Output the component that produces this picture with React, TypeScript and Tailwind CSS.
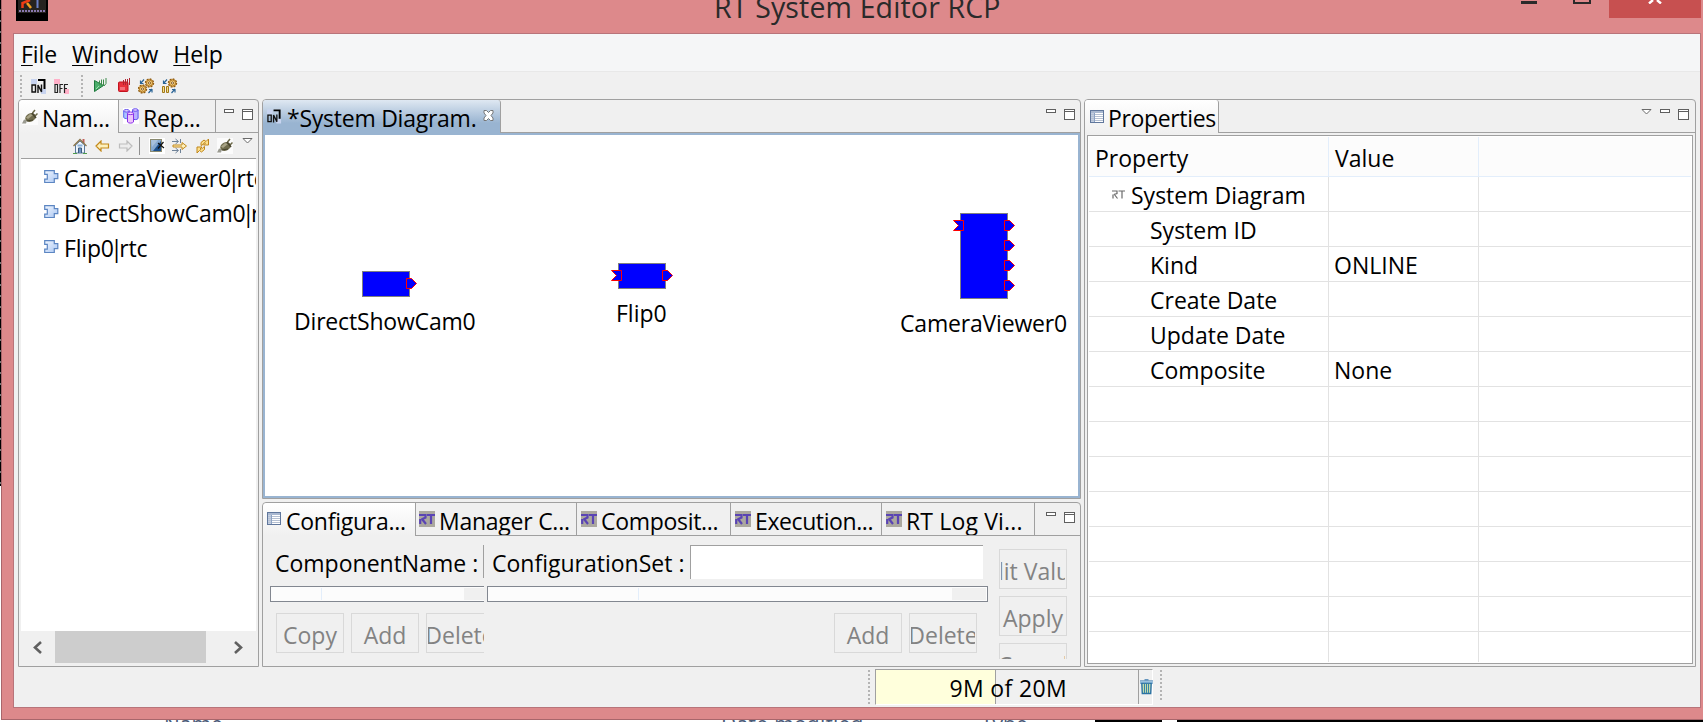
import React from "react";

type Kids = { children?: React.ReactNode };

const OnlineIcon = ({ off = false, small = false }: { off?: boolean; small?: boolean }) => (
  <svg width={small ? 15 : 16} height="16" viewBox="0 0 16 16" className="shrink-0">
    <rect x="0" y="1" width="6" height="5" fill={off ? "#ffb0c8" : "#c8d4f0"} />
    <rect x="10" y="11" width="5" height="5" fill={off ? "#ffb0c8" : "#c8d4f0"} />
    {!off && <path d="M7 2h6.500v9" fill="none" stroke="#000" strokeWidth="2" />}
    {off ? (
      <path d="M1 6.500h2.500v8H1zM6 15V6.500h3M6 10.500h2.500M10.500 15V6.500H14M10.500 10.500H13" fill="none" stroke="#222" strokeWidth="1.200" />
    ) : (
      <path d="M1 7h3.500v7H1zM7 15V7l3.500 7V6.500" fill="none" stroke="#111" strokeWidth="1.400" />
    )}
  </svg>
);

const PlugIcon = () => (
  <svg width="16" height="16" viewBox="0 0 16 16" className="shrink-0">
    <rect width="16" height="16" fill="#fbfbfb" />
    <path d="M0 14.500l2-4 3 1-1 3z" fill="#9a9a90" />
    <ellipse cx="8.500" cy="8.500" rx="5.500" ry="4.200" transform="rotate(-25 8.500 8.500)" fill="#6f6b4c" />
    <path d="M4 8.500l4-3.500 3 1-5 4z" fill="#a8a386" />
    <path d="M10.500 4l2.500-3M13 7l2.500-2.500" stroke="#6b6848" strokeWidth="1.500" />
    <path d="M10 4l4 5" stroke="#4a4630" strokeWidth="1.600" />
    <path d="M5 12l6-1" stroke="#45422c" />
  </svg>
);

const RepoIcon = () => (
  <svg width="16" height="16" viewBox="0 0 16 16" className="shrink-0">
    <rect width="16" height="16" fill="#fff" />
    <g strokeWidth="1">
      <path d="M.7 3v6.500c1 1.500 4.500 1.500 5.600 0V3z" fill="#aac4ff" stroke="#5a6cf0" />
      <ellipse cx="3.500" cy="2.800" rx="2.800" ry="1.300" fill="#d9d0ff" stroke="#6a55ee" />
      <path d="M9.500 2v8.500c1 1.500 4.500 1.500 5.600 0V2z" fill="#b9b0ff" stroke="#5a50ee" />
      <ellipse cx="12.300" cy="2" rx="2.800" ry="1.300" fill="#e4c8ff" stroke="#6a55ee" />
      <path d="M4.500 5.500v8.500c1 1.500 5 1.500 6 0V5.500z" fill="#ecc6fa" stroke="#8a30e8" />
      <ellipse cx="7.500" cy="5.300" rx="3" ry="1.300" fill="#f7dcff" stroke="#8a30e8" />
    </g>
  </svg>
);

const PlayIcon = () => (
  <svg width="15" height="15" viewBox="0 0 15 15" className="shrink-0">
    <path d="M1.500 2.500l9 5-9 6z" fill="#4bae6b" stroke="#1d7a3c" />
    <path d="M6.500 2.500v4M8.500 1.500v6M10.500 1.500v6M13 0v5.500L11 8" stroke="#3c8a4a" fill="none" />
    <path d="M3 11l3-3" stroke="#9be0ae" />
  </svg>
);

const StopIcon = () => (
  <svg width="15" height="15" viewBox="0 0 15 15" className="shrink-0">
    <rect x="1.500" y="4" width="9.500" height="9.500" rx="1" fill="#e8323c" stroke="#c3121e" />
    <rect x="3" y="9" width="5" height="3" fill="#f4707a" />
    <path d="M6.500 2v5M8.500 1v6M10.500 1v6M12.500 0v7" stroke="#b02430" />
  </svg>
);

const Gear = ({ x, y }: { x: number; y: number }) => (
  <g>
    <circle cx={x} cy={y} r="4" fill="#e8b75c" stroke="#8c5a14" strokeWidth="1.400" strokeDasharray="1.800 1.300" />
    <circle cx={x} cy={y} r="3" fill="#f4cd7c" stroke="#a8701c" strokeWidth=".9" />
    <circle cx={x} cy={y} r="1.100" fill="#fff" stroke="#7c4e10" strokeWidth=".9" />
  </g>
);

const GearsIcon = ({ pause = false }: { pause?: boolean }) => (
  <svg width="17" height="16" viewBox="0 0 17 16" className="shrink-0">
    <Gear x={11.500} y={5} />
    {pause ? (
      <path d="M1.500 8.500h2v6h-2zM5.500 8.500h2v6h-2z" fill="#f7e08a" stroke="#a07818" />
    ) : (
      <Gear x={4.500} y={11} />
    )}
    <path d="M2.500 5.500L6 1.500M2.500 2.500v3h3M10.500 15l3.500-4M11 11.500h3v3" stroke="#2a6496" fill="none" strokeWidth="1.200" />
  </svg>
);

const HouseIcon = () => (
  <svg width="14" height="16" viewBox="0 0 14 16" className="shrink-0">
    <path d="M2.500 7v8h9V7L7 3z" fill="#eef5fb" stroke="#5a7a9c" />
    <path d="M10.500 1v4" stroke="#c0605a" strokeWidth="2" />
    <path d="M.5 8L7 1.500 13.500 8" fill="none" stroke="#8a7448" strokeWidth="1.300" />
    <path d="M5.500 15v-5h3v5" fill="#6f94c0" stroke="#3c5c80" />
    <path d="M4.500 7.500h5" stroke="#8ab0d8" strokeWidth="2" />
    <path d="M0 15.500h4M10 15.500h4" stroke="#4f9c4a" />
  </svg>
);

const BackIcon = ({ flip = false }: { flip?: boolean }) => (
  <svg width="15" height="12" viewBox="0 0 15 12" className={flip ? "shrink-0 -scale-x-100" : "shrink-0"}>
    <path d="M1 6l5-5v3h7.500v4H6v3z" fill={flip ? "#ededed" : "#fdf0bc"} stroke={flip ? "#bdbdbd" : "#c48a1c"} strokeWidth="1.200" />
  </svg>
);

const EditIcon = () => (
  <svg width="16" height="16" viewBox="0 0 16 16" className="shrink-0">
    <rect width="16" height="16" fill="#fff" />
    <rect x="1.500" y="1.500" width="11" height="12" fill="#86a8d0" stroke="#8a8a70" />
    <path d="M12 3L4 13h8z" fill="#1c4f8c" />
    <path d="M2 2h7L3 9z" fill="#a8c0dc" />
    <path d="M9 5l6 5M14.500 4L9 10.500" stroke="#111" strokeWidth="1.200" />
  </svg>
);

const FilterIcon = () => (
  <svg width="16" height="16" viewBox="0 0 16 16" className="shrink-0">
    <path d="M0 3.500h6M0 12.500h6M3.500 1l3 2.500-3 2.500M3.500 10l3 2.500-3 2.500M8.500 1v4M8.500 11v4" fill="none" stroke="#6f8298" />
    <path d="M1 7h9V4.500L14.500 8 10 11.500V9H1z" fill="#fdf0bc" stroke="#c48a1c" />
  </svg>
);

const RefreshIcon = () => (
  <svg width="16" height="16" viewBox="0 0 16 16" className="shrink-0">
    <path d="M6 7.500V4.500L9 2l2 1.500 2.500-2.500v6H8.500l2-2-1-.5L8 6.500z" fill="#fde08c" stroke="#c0861a" />
    <path d="M9.500 8.500v3l-3 2.500-2-1.500L2 15V9h5l-2 2 1 .5L7.500 10z" fill="#fde08c" stroke="#c0861a" />
  </svg>
);

const ComponentIcon = () => (
  <svg width="15" height="14" viewBox="0 0 15 14" className="shrink-0">
    <defs>
      <linearGradient id="cmp" x1="0" y1="0" x2="1" y2="1">
        <stop offset="0" stopColor="#f2f7ff" />
        <stop offset="1" stopColor="#a9c6f2" />
      </linearGradient>
    </defs>
    <path d="M.7.7h9.600v3h3.500v5h-3.500v3.800H.7V9.200h2.600V4.300H.7z" fill="url(#cmp)" stroke="#5c86c2" strokeWidth="1.200" />
  </svg>
);

const TableIcon = () => (
  <svg width="14" height="13" viewBox="0 0 14 13" shapeRendering="crispEdges" className="shrink-0">
    <rect x=".5" y=".5" width="13" height="12" fill="#fff" stroke="#60779c" />
    <rect x="1" y="1" width="12" height="2" fill="#a9b8d0" />
    <rect x="1" y="3" width="3" height="9" fill="#c3cfe2" />
    <path d="M1 4.500h12M1 6.500h12M1 8.500h12M1 10.500h12" stroke="#b5c0d2" />
    <path d="M4.500 3v9" stroke="#8da3c4" />
  </svg>
);

const RtIcon = () => (
  <svg width="16" height="16" viewBox="0 0 16 16" className="shrink-0">
    <rect width="16" height="16" fill="#aba89f" />
    <path d="M0 4h6.500v2.500L2.500 8.500M3 8l4 5M1.200 8v5M8 4h8M12 4v9" fill="none" stroke="#5a44b4" strokeWidth="2.200" />
  </svg>
);

const SmallRt = () => (
  <svg width="13" height="9" viewBox="0 0 13 9" className="shrink-0">
    <path d="M0 1h5v2.500L2 4.500M2 4l3.500 4.500M1 4.500v4M6.500 1H13M10 1v7.500" fill="none" stroke="#6a6a6a" strokeWidth="1.200" />
  </svg>
);

const MinIcon = () => <span className="block h-1 w-2.5 shrink-0 border border-[#5f5f5f] bg-white" />;
const MaxIcon = () => (
  <span className="block h-[11px] w-[11px] shrink-0 border border-[#5f5f5f] bg-white">
    <span className="mt-px block h-px bg-[#5f5f5f]" />
  </span>
);
const MenuTriangle = () => (
  <svg width="11" height="7" viewBox="0 0 11 7" className="shrink-0">
    <path d="M1 .5h9L5.500 5z" fill="#fff" stroke="#6a6a6a" />
  </svg>
);

const Trash = () => (
  <svg width="13" height="16" viewBox="0 0 13 16" className="shrink-0">
    <path d="M1.800 4h9.400l-.5 10.500H2.300z" fill="#c4dcae" stroke="#2a72a4" strokeWidth="1.400" />
    <path d="M4.500 5v9M6.500 5v9M8.500 5v9" stroke="#3a84a4" />
    <path d="M0 4h13M0 2h13M4.500.8h4" stroke="#2b6fa8" strokeWidth="1" />
    <path d="M.5 3h12" stroke="#a9d2ee" />
  </svg>
);

const Grip = ({ h }: { h: string }) => (
  <span className={`block w-0.5 shrink-0 bg-[repeating-linear-gradient(to_bottom,#b4b4b4_0_2px,transparent_2px_4px)] ${h}`} />
);

const Tab = ({ children, className }: Kids & { className: string }) => (
  <div className={`flex h-[33px] shrink-0 overflow-hidden border-[#a0a0a0] whitespace-pre ${className}`}>{children}</div>
);

const Button = ({ children, className = "" }: Kids & { className?: string }) => (
  <div className={`flex h-10 w-[68px] shrink-0 justify-center overflow-hidden border border-[#d9d9d9] px-px pt-[5px] whitespace-pre text-[#838383] ${className}`}>
    <span className="flex w-16 shrink-0 justify-center overflow-hidden">{children}</span>
  </div>
);

const OutPort = ({ className }: { className: string }) => (
  <svg width="12" height="11" viewBox="0 0 12 11" className={`absolute ${className}`}>
    <path d="M.5.5h5l5 5-5 5h-5z" fill="#00f" stroke="#f00" />
  </svg>
);
const InPort = ({ className }: { className: string }) => (
  <svg width="12" height="11" viewBox="0 0 12 11" className={`absolute ${className}`}>
    <path d="M.5.5h10v10H.5l5-5z" fill="#00f" stroke="#f00" />
  </svg>
);

const properties: [string, string][] = [
  ["System ID", ""],
  ["Kind", "ONLINE"],
  ["Create Date", ""],
  ["Update Date", ""],
  ["Composite", "None"],
  ["", ""], ["", ""], ["", ""], ["", ""], ["", ""], ["", ""], ["", ""],
];

const bottomTabs: [string, string, string][] = [
  ["Manager C...", "w-[162px]", "tracking-[-0.25px]"],
  ["Composit...", "w-[154px]", "tracking-[-0.3px]"],
  ["Execution...", "w-[151px]", "tracking-[-0.4px]"],
  ["RT Log Vi...", "w-[153px]", "tracking-[0.15px]"],
];

function NamingView() {
  return (
    <section className="flex w-[241px] shrink-0 flex-col rounded-t-[4px] border border-[#a0a0a0]">
      <div className="flex h-[33px]">
        <Tab className="w-[99px] rounded-tl-[4px] bg-linear-to-b from-white to-[#f0f0f0] pl-[3px]">
          <span className="pt-[9px]"><PlugIcon /></span>
          <span className="pt-0.5 pl-1 tracking-[-0.3px]">Nam...</span>
        </Tab>
        <Tab className="w-[98px] border-r border-b border-l pl-1">
          <span className="pt-2"><RepoIcon /></span>
          <span className="pt-0.5 pl-1 tracking-[-0.3px]">Rep...</span>
        </Tab>
        <div className="flex grow gap-2 border-b border-[#a0a0a0] pt-[9px] pl-2"><MinIcon /><MaxIcon /></div>
      </div>
      <div className="mx-0.5 flex h-[26px] items-center border-b border-[#a0a0a0] pl-[52px]">
        <HouseIcon />
        <span className="w-2" /><BackIcon />
        <span className="w-2" /><BackIcon flip />
        <span className="ml-1.5 h-[18px] w-px bg-[#909090]" />
        <span className="w-[9px]" /><EditIcon />
        <span className="w-[7px]" /><FilterIcon />
        <span className="w-[7px]" /><RefreshIcon />
        <span className="w-1.5" /><PlugIcon />
        <span className="mb-2 ml-[9px]"><MenuTriangle /></span>
      </div>
      <div className="mx-0.5 grow overflow-hidden bg-white pl-[23px]">
        {["CameraViewer0", "DirectShowCam0", "Flip0"].map((n) => (
          <div key={n} className="flex h-[35px] items-center gap-[5px] whitespace-pre">
            <ComponentIcon />
            <span className="pt-0.5 tracking-[-0.18px]">{n}<span className="-mx-[3.500px]">|</span>rtc</span>
          </div>
        ))}
      </div>
      <div className="mx-0.5 mb-[3px] flex h-8 items-center bg-[#f0f0f0]">
        <svg width="34" height="32" viewBox="0 0 34 32"><path d="M20 11l-6 5.500 6 5.500" fill="none" stroke="#606060" strokeWidth="2.600" /></svg>
        <span className="h-8 w-[151px] bg-[#cdcdcd]" />
        <svg width="50" height="32" viewBox="0 0 50 32"><path d="M29 11l6 5.500-6 5.500" fill="none" stroke="#606060" strokeWidth="2.600" /></svg>
      </div>
    </section>
  );
}

function DiagramView() {
  return (
    <section className="flex h-[400px] flex-col rounded-t-[4px] border border-[#a0a0a0]">
      <div className="flex h-[33px]">
        <Tab className="w-[238px] rounded-t-[3px] border-r bg-linear-to-b from-[#dfe8f2] to-[#99b4d1] to-70% pl-1">
          <span className="pt-2"><OnlineIcon small /></span>
          <span className="pt-0.5 pl-[5px] tracking-[-0.25px]">*System Diagram.</span>
          <svg width="11" height="11" viewBox="0 0 11 11" className="mt-2.5 ml-[7px]">
            <path d="M1 .5h2.500l2 2 2-2H10V3L8 5.500 10 8v2.500H7.500l-2-2-2 2H1V8l2-2.500L1 3z" fill="#fff" stroke="#777" />
          </svg>
        </Tab>
        <div className="flex grow justify-end gap-2 border-b border-[#a0a0a0] pt-[9px] pr-[5px]"><MinIcon /><MaxIcon /></div>
      </div>
      <div className="relative grow border-2 border-[#99b4d1] bg-white tracking-[-0.18px] whitespace-pre">
        <div className="absolute top-[136px] left-[97px] h-[26px] w-12 border border-[#808080] bg-[#00f]" />
        <OutPort className="top-[143px] left-[141px]" />
        <span className="absolute top-[170px] left-[29px]">DirectShowCam0</span>
        <div className="absolute top-32 left-[353px] h-[26px] w-12 border border-[#808080] bg-[#00f]" />
        <InPort className="top-[135px] left-[346px]" />
        <OutPort className="top-[135px] left-[397px]" />
        <span className="absolute top-[162px] left-[351px] tracking-normal">Flip0</span>
        <div className="absolute top-[78px] left-[695px] h-[86px] w-12 border border-[#808080] bg-[#00f]" />
        <InPort className="top-[85px] left-[688px]" />
        <OutPort className="top-[85px] left-[739px]" />
        <OutPort className="top-[105px] left-[739px]" />
        <OutPort className="top-[125px] left-[739px]" />
        <OutPort className="top-[145px] left-[739px]" />
        <span className="absolute top-[172px] left-[635px]">CameraViewer0</span>
      </div>
    </section>
  );
}

function ConfigurationView() {
  return (
    <section className="mt-[3px] flex h-[165px] flex-col rounded-t-[4px] border border-[#a0a0a0]">
      <div className="flex h-[33px]">
        <Tab className="w-[152px] rounded-tl-[4px] bg-linear-to-b from-white to-[#f0f0f0] pl-1">
          <span className="pt-[9px]"><TableIcon /></span>
          <span className="pt-0.5 pl-[5px] tracking-[-0.25px]">Configura...</span>
        </Tab>
        {bottomTabs.map(([label, w, tracking], i) => (
          <Tab key={label} className={`${w} border-b ${i === 0 ? "border-x pl-[3px]" : "border-r pl-1"}`}>
            <span className="pt-2"><RtIcon /></span>
            <span className={`pt-0.5 pl-1 ${tracking}`}>{label}</span>
          </Tab>
        ))}
        <div className="flex grow justify-end gap-2 border-b border-[#a0a0a0] pt-[9px] pr-[5px]"><MinIcon /><MaxIcon /></div>
      </div>
      <div className="flex grow pl-[7px]">
        <div className="flex w-[214px] flex-col overflow-hidden">
          <div className="mt-[9px] flex h-[33px] items-start border-r border-[#a0a0a0] pt-[2px] pl-[5px] whitespace-pre">ComponentName :</div>
          <div className="mt-2 flex h-4 border-y border-l border-[#828790] bg-[#fcfcfc] py-px">
            <span className="ml-[50px] h-full w-px bg-[#e3eefb]" />
            <span className="ml-auto h-full w-5 bg-[#f0f0f0]" />
          </div>
          <div className="mt-[11px] flex gap-[7px] pl-1.5">
            <Button>Copy</Button><Button>Add</Button><Button>Delete</Button>
          </div>
        </div>
        <div className="ml-[3px] flex w-[501px] flex-col">
          <div className="mt-[9px] flex h-[34px] items-start pl-[5px] whitespace-pre">
            <span className="w-[198px] pt-[2px]">ConfigurationSet :</span>
            <span className="h-[34px] w-[293px] border-t border-l border-[#a0a0a0] bg-white" />
          </div>
          <div className="mt-[7px] flex h-4 border border-[#828790] bg-[#fcfcfc] p-px">
            <span className="ml-[149px] h-full w-px bg-[#e3eefb]" />
            <span className="ml-auto h-full w-[34px] bg-[#f0f0f0]" />
          </div>
          <div className="mt-[11px] flex justify-end gap-[7px] pr-[11px]">
            <Button>Add</Button><Button>Delete</Button>
          </div>
        </div>
        <div className="mt-[13px] ml-[11px] flex h-[110px] flex-col gap-[7px] overflow-hidden">
          <Button><span className="-ml-1.5">Edit Value</span></Button><Button>Apply</Button><Button>Cancel</Button>
        </div>
      </div>
    </section>
  );
}

function PropertiesView() {
  return (
    <section className="ml-[3px] flex w-[612px] shrink-0 flex-col rounded-t-[4px] border border-[#a0a0a0]">
      <div className="flex h-[33px]">
        <Tab className="w-[134px] rounded-t-[3px] border-r bg-linear-to-b from-white to-[#f0f0f0] pl-[5px]">
          <span className="pt-[10px]"><TableIcon /></span>
          <span className="pt-0.5 pl-1 tracking-[-0.35px]">Properties</span>
        </Tab>
        <div className="flex grow justify-end gap-2 border-b border-[#a0a0a0] pt-[9px] pr-1.5"><MenuTriangle /><MinIcon /><MaxIcon /></div>
      </div>
      <div className="mx-0.5 mt-0.5 mb-0.5 flex grow flex-col overflow-hidden border border-[#a0a0a0] bg-white p-px whitespace-pre">
        <div className="flex h-10 shrink-0 border-b border-[#e3eefb] bg-[#fcfcfc]">
          <div className="flex w-60 items-center border-r border-[#e3eefb] pt-0.5 pl-1.5">Property</div>
          <div className="flex w-[150px] items-center border-r border-[#e3eefb] pt-0.5 pl-1.5">Value</div>
        </div>
        <div className="flex h-[35px] shrink-0 border-b border-[#e2e2e2]">
          <div className="flex w-60 items-center border-r border-[#e2e2e2] pl-[23px]"><SmallRt /><span className="pt-0.5 pl-1.5">System Diagram</span></div>
          <div className="w-[150px] border-r border-[#e2e2e2]" />
        </div>
        {properties.map(([name, value], i) => (
          <div key={i} className="flex h-[35px] shrink-0 border-b border-[#e2e2e2]">
            <div className="flex w-60 items-center border-r border-[#e2e2e2] pt-0.5 pl-[61px]">{name}</div>
            <div className="flex w-[150px] items-center border-r border-[#e2e2e2] pt-0.5 pl-[5px]">{value}</div>
          </div>
        ))}
        <div className="flex grow">
          <div className="w-60 border-r border-[#e2e2e2]" />
          <div className="w-[150px] border-r border-[#e2e2e2]" />
        </div>
      </div>
    </section>
  );
}

export default function App() {
  return (
    <div className="flex h-[722px] w-[1703px] flex-col overflow-hidden bg-white font-['Open_Sans','Noto_Sans',sans-serif] text-[23px] leading-8 text-black">
      <div className="flex h-[720px]">
        <div className="w-px shrink-0">
          <div className="h-[486px] bg-[repeating-linear-gradient(to_bottom,#000_0_9px,#777_9px_11px)]" />
        </div>
        <div className="flex w-[1702px] shrink-0 flex-col border-b border-l border-[#a8666b] bg-[#dd898b] pl-[11px]">
          <header className="flex h-[33px] shrink-0">
            <div className="ml-[3px] h-[21px] w-8 bg-black">
              <svg width="32" height="21" viewBox="0 0 32 21">
                <rect x="2" width="28" height="13" fill="#262320" />
                <path d="M14 0L6.500 3v5" fill="none" stroke="#f03c14" strokeWidth="2.500" />
                <path d="M11 3l4 5" stroke="#f0a020" strokeWidth="2.500" />
                <path d="M21.500 0v8" stroke="#6a80c8" strokeWidth="2" />
                <path d="M3 11h26" stroke="#8878b0" strokeWidth="2" strokeDasharray="2 1" />
              </svg>
            </div>
            <h1 className="-mt-[13px] ml-[666px] w-[807px] text-[28.500px] leading-10 tracking-[0.15px] whitespace-pre text-[#2a2a2a]">RT System Editor RCP</h1>
            <span className="mt-px h-[3px] w-4 bg-[#2a2a2a]" />
            <span className="ml-9 h-1 w-[18px] border-x-2 border-b-2 border-[#2a2a2a]" />
            <span className="ml-[18px] flex h-[18px] w-[92px] justify-center bg-[#c75050]">
              <svg width="14" height="4" viewBox="0 0 14 4"><path d="M1 3.500L5 0M13 3.500L9 0" stroke="#fff" strokeWidth="2.400" /></svg>
            </span>
          </header>
          <div className="flex h-[675px] w-[1688px] flex-col border border-[#b8747a] bg-[#f0f0f0]">
            <nav className="flex h-[38px] shrink-0 gap-[15px] border-b border-[#e8e8e8] bg-[#f5f6f7] pt-1 pl-[7px]">
              {["File", "Window", "Help"].map((m) => (
                <span key={m} className="tracking-[-0.1px]"><span className="underline decoration-1 underline-offset-2">{m[0]}</span>{m.slice(1)}</span>
              ))}
            </nav>
            <div className="flex h-[27px] shrink-0 items-center pl-1.5">
              <Grip h="h-[22px]" />
              <span className="w-[9px]" /><OnlineIcon />
              <span className="w-[7px]" /><OnlineIcon off />
              <span className="w-[11px]" /><Grip h="h-[22px]" />
              <span className="w-2.5" /><PlayIcon />
              <span className="w-[9px]" /><StopIcon />
              <span className="w-[6px]" /><GearsIcon />
              <span className="w-[6px]" /><GearsIcon pause />
            </div>
            <main className="flex h-[568px] shrink-0 pl-1">
              <NamingView />
              <div className="ml-[3px] w-[819px] shrink-0">
                <DiagramView />
                <ConfigurationView />
              </div>
              <PropertiesView />
            </main>
            <footer className="flex grow pt-0.5 pl-[854px]">
              <span className="pt-px"><Grip h="h-[34px]" /></span>
              <div className="ml-[5px] flex h-9 w-[278px] border-t border-r border-b border-l border-t-[#a0a0a0] border-r-white border-b-white border-l-[#a0a0a0]">
                <div className="flex w-[263px] shrink-0 justify-end border-r border-[#a0a0a0] bg-[linear-gradient(to_right,#ffffdc_0_119px,#a0a0a0_119px_120px,#f0f0f0_120px)] pt-0.5 pr-[71px] tracking-[0.35px] whitespace-pre">9M of 20M</div>
                <span className="pt-[9px] pl-px"><Trash /></span>
              </div>
              <span className="ml-[7px] pt-px"><Grip h="h-[30px]" /></span>
            </footer>
          </div>
        </div>
      </div>
      <div className="flex h-0.5 w-full shrink-0 overflow-hidden text-[21px] leading-8 text-[#4a5a78]">
        <span className="-mt-3 ml-[164px] w-[557px]">Name</span>
        <span className="-mt-3 w-[260px] tracking-[0.3px]">Date modified</span>
        <span className="-mt-3 w-[114px]">Type</span>
        <span className="w-[67px] bg-black" />
        <span className="ml-[15px] w-[526px] bg-black" />
      </div>
    </div>
  );
}
